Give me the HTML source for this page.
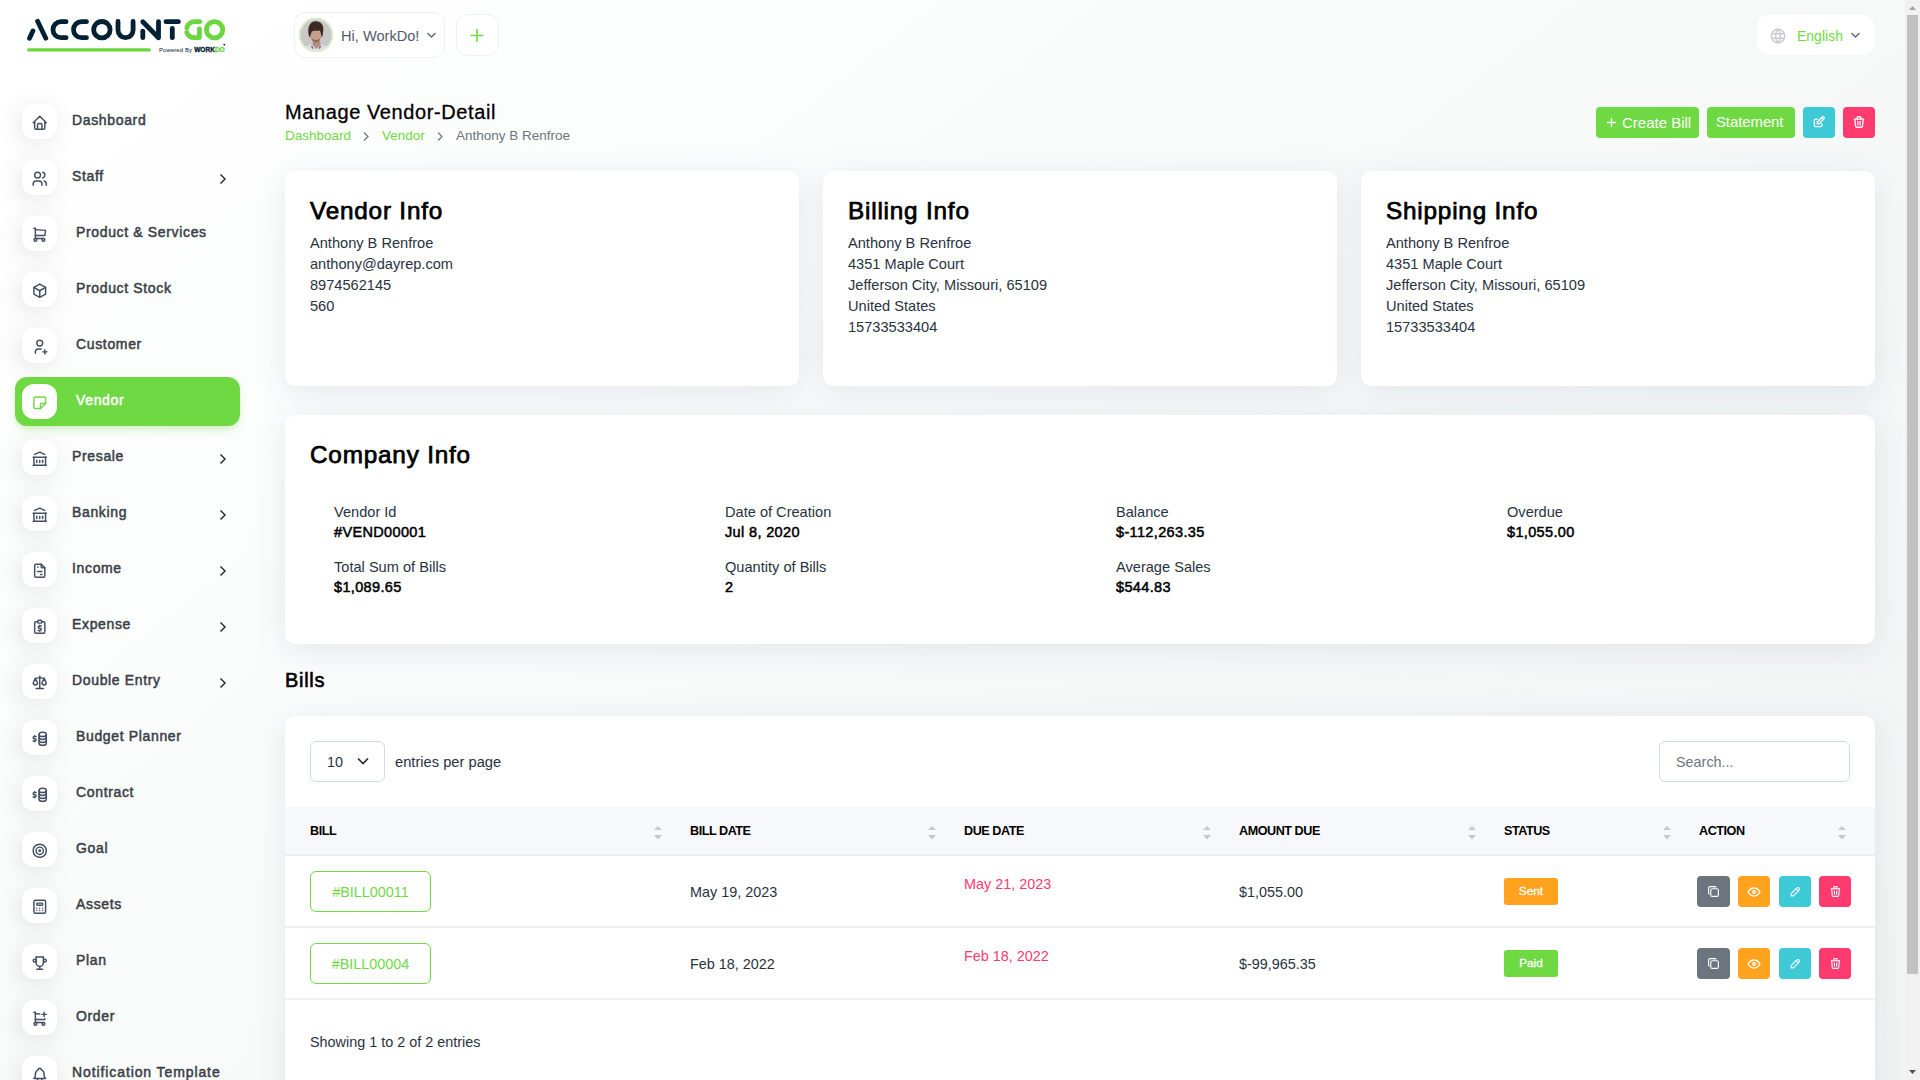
<!DOCTYPE html>
<html><head><meta charset="utf-8">
<style>
*{box-sizing:border-box;margin:0;padding:0}
html,body{width:1920px;height:1080px;overflow:hidden}
body{font-family:"Liberation Sans",sans-serif;color:#293240;position:relative;
background:linear-gradient(141.55deg,rgba(240,244,243,0) 3.46%,#f0f4f3 99.86%),#fff;}
.abs{position:absolute}
.card{position:absolute;background:#fff;border-radius:10px;box-shadow:0 6px 30px rgba(182,186,203,0.3)}
/* sidebar */
.mi{position:absolute;left:15px;width:225px;height:49px}
.mi .ic{position:absolute;left:7px;top:7px;width:35px;height:35px;border-radius:12px;background:#fff;box-shadow:-3px 4px 23px rgba(0,0,0,0.1);display:flex;align-items:center;justify-content:center}
.mi .ic svg{width:17.5px;height:17.5px;margin-top:2px;margin-left:1px;fill:none;stroke:#434f60;stroke-width:2;stroke-linecap:round;stroke-linejoin:round}
.mi .tx{position:absolute;left:57px;top:-1px;line-height:49px;font-size:14px;letter-spacing:0.65px;font-weight:400;-webkit-text-stroke:0.5px currentColor;color:#3a3f47;white-space:nowrap}
.mi .ch{position:absolute;left:204px;top:20px;width:8px;height:12px}
.mi.act{background:#6fd943;border-radius:12px;box-shadow:0 5px 7px -1px rgba(111,217,67,0.3)}
.mi.act .tx{color:#fff}
.mi.act .ic{box-shadow:none}
.mi.act .ic svg{stroke:#6fd943}
.btn{border-radius:4px}
.h5{font-size:24.3px;letter-spacing:0.8px;line-height:30px;font-weight:400;-webkit-text-stroke:0.75px #000;color:#000;white-space:nowrap}
.info{font-size:14.6px;line-height:21px;color:#293240;white-space:nowrap}
.lab{font-size:14.6px;line-height:20px;color:#293240;white-space:nowrap}
.val{font-size:14.5px;letter-spacing:0.35px;line-height:20px;font-weight:400;-webkit-text-stroke:0.5px #000;color:#000;white-space:nowrap}
.th{font-size:12.6px;letter-spacing:-0.45px;line-height:18px;font-weight:700;color:#000;white-space:nowrap}
.td{font-size:14.4px;line-height:18px;color:#293240;white-space:nowrap}
.sb{position:absolute;left:1905px;top:0;width:15px;height:1080px;background:#f1f1f1}
</style></head>
<body>


<!-- logo -->
<svg class="abs" style="left:0;top:0" width="260" height="60" viewBox="0 0 260 60">
 <g fill="none" stroke="#022133" stroke-width="4.8" stroke-linecap="round" stroke-linejoin="round">
  <path d="M29.5 38.2L32.9 30.9"/><path d="M37.6 21.3L45.8 38.2"/>
  <path d="M66.1 21.7H61A8 8 0 0 0 61 37.7H66.1"/>
  <path d="M86.5 21.7H81.5A8 8 0 0 0 81.5 37.7H86.5"/>
  <circle cx="101.9" cy="29.7" r="8.2"/>
  <path d="M118 21.5V30.1A7.55 7.55 0 0 0 133.1 30.1V21.5"/>
  <path d="M142.8 31.2V37.7"/><path d="M142.8 21.7L158.5 37.7V21.7"/>
  <path d="M166 21.7H178.4"/><path d="M172.3 28.4V37.7"/>
 </g>
 <g fill="none" stroke="#6bd63d" stroke-width="4.8" stroke-linecap="round" stroke-linejoin="round">
  <path d="M199.8 21.7H194.6A8 8 0 0 0 186.8 27.9"/>
  <path d="M186.8 32.4A8 8 0 0 0 194.6 37.7H199.4V29"/>
  <circle cx="214.6" cy="29.8" r="8.15"/>
  <path d="M28.7 49.9H149.2" stroke-width="3.3"/>
 </g>
 <text x="159" y="52.2" font-family="Liberation Sans" font-size="6" fill="#022133" textLength="33" lengthAdjust="spacing">Powered By</text>
 <text x="194.2" y="52.2" font-family="Liberation Sans" font-size="7" font-weight="700" fill="#022133" stroke="#022133" stroke-width="0.35" textLength="30.5" lengthAdjust="spacingAndGlyphs">WORK<tspan fill="#6bd63d" stroke="#6bd63d">DO</tspan></text>
 <circle cx="224.3" cy="44.7" r="0.9" fill="#022133"/>
</svg>

<!-- sidebar -->
<div class="mi" style="top:97px"><div class="ic"><svg viewBox="0 0 24 24"><path d="M5 12l-2 0l9 -9l9 9l-2 0"/><path d="M5 12v7a2 2 0 0 0 2 2h10a2 2 0 0 0 2 -2v-7"/><path d="M9 21v-6a2 2 0 0 1 2 -2h2a2 2 0 0 1 2 2v6"/></svg></div><div class="tx" style="left:57px">Dashboard</div></div>
<div class="mi" style="top:153px"><div class="ic"><svg viewBox="0 0 24 24"><path d="M9 7m-4 0a4 4 0 1 0 8 0a4 4 0 1 0 -8 0"/><path d="M3 21v-2a4 4 0 0 1 4 -4h4a4 4 0 0 1 4 4v2"/><path d="M16 3.13a4 4 0 0 1 0 7.75"/><path d="M21 21v-2a4 4 0 0 0 -3 -3.85"/></svg></div><div class="tx" style="left:57px">Staff</div><svg class="ch" viewBox="0 0 8 12"><path d="M1.5 1.5l4.5 4.5-4.5 4.5" fill="none" stroke="#293240" stroke-width="1.45"/></svg></div>
<div class="mi" style="top:209px"><div class="ic"><svg viewBox="0 0 24 24"><path d="M6 19m-2 0a2 2 0 1 0 4 0a2 2 0 1 0 -4 0"/><path d="M17 19m-2 0a2 2 0 1 0 4 0a2 2 0 1 0 -4 0"/><path d="M17 17h-11v-14h-2"/><path d="M6 5l14 1l-1 7h-13"/></svg></div><div class="tx" style="left:61px">Product &amp; Services</div></div>
<div class="mi" style="top:265px"><div class="ic"><svg viewBox="0 0 24 24"><path d="M12 3l8 4.5l0 9l-8 4.5l-8 -4.5l0 -9l8 -4.5"/><path d="M12 12l8 -4.5"/><path d="M12 12l0 9"/><path d="M12 12l-8 -4.5"/></svg></div><div class="tx" style="left:61px">Product Stock</div></div>
<div class="mi" style="top:321px"><div class="ic"><svg viewBox="0 0 24 24"><path d="M8 7a4 4 0 1 0 8 0a4 4 0 0 0 -8 0"/><path d="M16 19h6"/><path d="M19 16v6"/><path d="M6 21v-2a4 4 0 0 1 4 -4h4"/></svg></div><div class="tx" style="left:61px">Customer</div></div>
<div class="mi act" style="top:377px"><div class="ic"><svg viewBox="0 0 24 24"><path d="M13 20l7 -7"/><path d="M13 20v-6a1 1 0 0 1 1 -1h6v-7a2 2 0 0 0 -2 -2h-12a2 2 0 0 0 -2 2v12a2 2 0 0 0 2 2h7"/></svg></div><div class="tx" style="left:61px">Vendor</div></div>
<div class="mi" style="top:433px"><div class="ic"><svg viewBox="0 0 24 24"><path d="M3 21l18 0"/><path d="M3 10l18 0"/><path d="M5 6l7 -3l7 3"/><path d="M4 10l0 11"/><path d="M20 10l0 11"/><path d="M8 14l0 3"/><path d="M12 14l0 3"/><path d="M16 14l0 3"/></svg></div><div class="tx" style="left:57px">Presale</div><svg class="ch" viewBox="0 0 8 12"><path d="M1.5 1.5l4.5 4.5-4.5 4.5" fill="none" stroke="#293240" stroke-width="1.45"/></svg></div>
<div class="mi" style="top:489px"><div class="ic"><svg viewBox="0 0 24 24"><path d="M3 21l18 0"/><path d="M3 10l18 0"/><path d="M5 6l7 -3l7 3"/><path d="M4 10l0 11"/><path d="M20 10l0 11"/><path d="M8 14l0 3"/><path d="M12 14l0 3"/><path d="M16 14l0 3"/></svg></div><div class="tx" style="left:57px">Banking</div><svg class="ch" viewBox="0 0 8 12"><path d="M1.5 1.5l4.5 4.5-4.5 4.5" fill="none" stroke="#293240" stroke-width="1.45"/></svg></div>
<div class="mi" style="top:545px"><div class="ic"><svg viewBox="0 0 24 24"><path d="M14 3v4a1 1 0 0 0 1 1h4"/><path d="M17 21h-10a2 2 0 0 1 -2 -2v-14a2 2 0 0 1 2 -2h7l5 5v11a2 2 0 0 1 -2 2z"/><path d="M9 7l1 0"/><path d="M9 13l6 0"/><path d="M13 17l2 0"/></svg></div><div class="tx" style="left:57px">Income</div><svg class="ch" viewBox="0 0 8 12"><path d="M1.5 1.5l4.5 4.5-4.5 4.5" fill="none" stroke="#293240" stroke-width="1.45"/></svg></div>
<div class="mi" style="top:601px"><div class="ic"><svg viewBox="0 0 24 24"><path d="M9 5h-2a2 2 0 0 0 -2 2v12a2 2 0 0 0 2 2h10a2 2 0 0 0 2 -2v-12a2 2 0 0 0 -2 -2h-2"/><path d="M9 5a2 2 0 0 1 2 -2h2a2 2 0 0 1 2 2v0a2 2 0 0 1 -2 2h-2a2 2 0 0 1 -2 -2z"/><path d="M14 11h-2.5a1.5 1.5 0 0 0 0 3h1a1.5 1.5 0 0 1 0 3h-2.5"/><path d="M12 17v1m0 -8v1"/></svg></div><div class="tx" style="left:57px">Expense</div><svg class="ch" viewBox="0 0 8 12"><path d="M1.5 1.5l4.5 4.5-4.5 4.5" fill="none" stroke="#293240" stroke-width="1.45"/></svg></div>
<div class="mi" style="top:657px"><div class="ic"><svg viewBox="0 0 24 24"><path d="M7 20l10 0"/><path d="M6 6l6 -1l6 1"/><path d="M12 3l0 17"/><path d="M9 12l-3 -6l-3 6a3 3 0 0 0 6 0"/><path d="M21 12l-3 -6l-3 6a3 3 0 0 0 6 0"/></svg></div><div class="tx" style="left:57px">Double Entry</div><svg class="ch" viewBox="0 0 8 12"><path d="M1.5 1.5l4.5 4.5-4.5 4.5" fill="none" stroke="#293240" stroke-width="1.45"/></svg></div>
<div class="mi" style="top:713px"><div class="ic"><svg viewBox="0 0 24 24"><path d="M11 6a5 3 0 1 0 10 0a5 3 0 1 0 -10 0"/><path d="M11 6v4c0 1.657 2.239 3 5 3s5 -1.343 5 -3v-4"/><path d="M11 10v4c0 1.657 2.239 3 5 3s5 -1.343 5 -3v-4"/><path d="M11 14v4c0 1.657 2.239 3 5 3s5 -1.343 5 -3v-4"/><path d="M7 9h-2.5a1.5 1.5 0 0 0 0 3h1a1.5 1.5 0 0 1 0 3h-2.5"/><path d="M5 15v1m0 -8v1"/></svg></div><div class="tx" style="left:61px">Budget Planner</div></div>
<div class="mi" style="top:769px"><div class="ic"><svg viewBox="0 0 24 24"><path d="M11 6a5 3 0 1 0 10 0a5 3 0 1 0 -10 0"/><path d="M11 6v4c0 1.657 2.239 3 5 3s5 -1.343 5 -3v-4"/><path d="M11 10v4c0 1.657 2.239 3 5 3s5 -1.343 5 -3v-4"/><path d="M11 14v4c0 1.657 2.239 3 5 3s5 -1.343 5 -3v-4"/><path d="M7 9h-2.5a1.5 1.5 0 0 0 0 3h1a1.5 1.5 0 0 1 0 3h-2.5"/><path d="M5 15v1m0 -8v1"/></svg></div><div class="tx" style="left:61px">Contract</div></div>
<div class="mi" style="top:825px"><div class="ic"><svg viewBox="0 0 24 24"><path d="M11 12a1 1 0 1 0 2 0a1 1 0 1 0 -2 0"/><path d="M7 12a5 5 0 1 0 10 0a5 5 0 1 0 -10 0"/><path d="M3 12a9 9 0 1 0 18 0a9 9 0 1 0 -18 0"/></svg></div><div class="tx" style="left:61px">Goal</div></div>
<div class="mi" style="top:881px"><div class="ic"><svg viewBox="0 0 24 24"><path d="M4 5a2 2 0 0 1 2 -2h12a2 2 0 0 1 2 2v14a2 2 0 0 1 -2 2h-12a2 2 0 0 1 -2 -2z"/><path d="M8 8a1 1 0 0 1 1 -1h6a1 1 0 0 1 1 1v1a1 1 0 0 1 -1 1h-6a1 1 0 0 1 -1 -1z"/><path d="M8 14l0 .01"/><path d="M12 14l0 .01"/><path d="M16 14l0 .01"/><path d="M8 17l0 .01"/><path d="M12 17l0 .01"/><path d="M16 17l0 .01"/></svg></div><div class="tx" style="left:61px">Assets</div></div>
<div class="mi" style="top:937px"><div class="ic"><svg viewBox="0 0 24 24"><path d="M8 21l8 0"/><path d="M12 17l0 4"/><path d="M7 4l10 0"/><path d="M17 4v8a5 5 0 0 1 -10 0v-8"/><path d="M3 9a2 2 0 1 0 4 0a2 2 0 1 0 -4 0"/><path d="M17 9a2 2 0 1 0 4 0a2 2 0 1 0 -4 0"/></svg></div><div class="tx" style="left:61px">Plan</div></div>
<div class="mi" style="top:993px"><div class="ic"><svg viewBox="0 0 24 24"><circle cx="6" cy="19" r="2"/><circle cx="17" cy="19" r="2"/><path d="M17 17h-11v-14h-2"/><path d="M6 5l6 .429m7.138 6.573l-.143 1h-13"/><path d="M15 6h6m-3 -3v6"/></svg></div><div class="tx" style="left:61px">Order</div></div>
<div class="mi" style="top:1049px"><div class="ic"><svg viewBox="0 0 24 24"><path d="M10 5a2 2 0 1 1 4 0a7 7 0 0 1 4 6v3a4 4 0 0 0 2 3h-16a4 4 0 0 0 2 -3v-3a7 7 0 0 1 4 -6"/><path d="M9 17v1a3 3 0 0 0 6 0v-1"/></svg></div><div class="tx" style="left:57px;letter-spacing:0.9px">Notification Template</div></div>

<!-- header -->
<div class="abs" style="left:294px;top:12px;width:151px;height:46px;background:#fff;border:1px solid #eef0f2;border-radius:12px"></div>
<div class="abs" style="left:299px;top:18px;width:34px;height:34px;border-radius:50%;overflow:hidden;background:#cbc7c6">
 <svg width="34" height="34" viewBox="0 0 34 34" style="display:block">
  <rect width="34" height="34" fill="#cbc7c6"/>
  <path d="M2 34C4 29 9 27 13 26.5L17.5 30L22 26.5C26 27 30 29 32 34Z" fill="#dcdce5"/>
  <path d="M14 22L21 22L21.5 27L17.5 31L13.5 27Z" fill="#b38e80"/>
  <path d="M12.5 28l1.5 2.5M21.5 28l-1.2 2.5" stroke="#4f5573" stroke-width="1.2"/>
  <ellipse cx="16.8" cy="17.8" rx="5.2" ry="6.3" fill="#c89e8e"/>
  <path d="M11.8 19C12.5 22.5 14.5 24.5 16.8 24.5S21.2 22.5 21.8 19C21 21 19 22 16.8 22S12.6 21 11.8 19Z" fill="#8e6c60"/>
  <path d="M9.5 16C8.5 9 11 3.5 16.5 3.3C22.5 3.2 25 7.5 24.2 13C24 16 23.5 18.5 22.5 19.5C22 16 21.5 13.5 20.5 12.5C18.5 13.5 15 12 13 13.5C12 15 11.5 17 11.2 19.5C10 18.5 9.7 17.5 9.5 16Z" fill="#3a2a22"/>
 </svg>
 <div style="position:absolute;left:0;top:0;width:34px;height:34px;border-radius:50%;box-shadow:inset 0 0 0 1.5px #d9f5cd"></div>
</div>
<div class="abs" style="left:341px;top:27px;font-size:14.6px;line-height:18px;color:#525b69;white-space:nowrap">Hi, WorkDo!</div>
<svg class="abs" style="left:426px;top:31px" width="11" height="8" viewBox="0 0 11 8"><path d="M1.5 2l4 4 4-4" fill="none" stroke="#5b6470" stroke-width="1.3"/></svg>
<div class="abs" style="left:456px;top:14px;width:43px;height:42px;background:#fff;border:1px solid #eef0f2;border-radius:12px"></div>
<svg class="abs" style="left:469px;top:28px" width="16" height="15" viewBox="0 0 16 15"><path d="M8 1V14M1.5 7.5H14.5" stroke="#6fd943" stroke-width="1.6" fill="none"/></svg>

<div class="abs" style="left:1757px;top:15px;width:117px;height:40px;background:#fff;border-radius:12px"></div>
<svg class="abs" style="left:1769px;top:27px" width="18" height="18" viewBox="0 0 24 24" fill="none" stroke="#c9cdd2" stroke-width="2" stroke-linecap="round"><circle cx="12" cy="12" r="9"/><path d="M3.6 9h16.8M3.6 15h16.8M11.5 3a17 17 0 0 0 0 18M12.5 3a17 17 0 0 1 0 18"/></svg>
<div class="abs" style="left:1797px;top:27px;font-size:14px;line-height:18px;color:#6fd943;white-space:nowrap">English</div>
<svg class="abs" style="left:1850px;top:31px" width="11" height="8" viewBox="0 0 11 8"><path d="M1.5 2l4 4 4-4" fill="none" stroke="#5b6470" stroke-width="1.3"/></svg>


<!-- page header -->
<div class="abs" style="left:285px;top:99.5px;font-size:20px;letter-spacing:0.6px;-webkit-text-stroke:0.3px #000;line-height:24px;color:#000;white-space:nowrap">Manage Vendor-Detail</div>
<div class="abs" style="left:285px;top:128px;font-size:13.5px;line-height:16px;white-space:nowrap;color:#6c757d">
 <span style="color:#6fd943">Dashboard</span>
</div>
<div class="abs" style="left:382px;top:128px;font-size:13.5px;line-height:16px;white-space:nowrap;color:#6fd943">Vendor</div>
<div class="abs" style="left:456px;top:128px;font-size:13.5px;line-height:16px;white-space:nowrap;color:#6c757d">Anthony B Renfroe</div>
<svg class="abs" style="left:362px;top:131px" width="8" height="11" viewBox="0 0 8 11"><path d="M2 1.5l4 4-4 4" fill="none" stroke="#6c757d" stroke-width="1.2"/></svg>
<svg class="abs" style="left:436px;top:131px" width="8" height="11" viewBox="0 0 8 11"><path d="M2 1.5l4 4-4 4" fill="none" stroke="#6c757d" stroke-width="1.2"/></svg>

<div class="abs btn" style="left:1596px;top:107px;width:103px;height:31px;background:#6fd943"></div>
<svg class="abs" style="left:1606px;top:117px" width="11" height="11" viewBox="0 0 11 11"><path d="M5.5 1V10M1 5.5H10" stroke="#fff" stroke-width="1.3"/></svg><div class="abs" style="left:1622px;top:114px;font-size:15px;line-height:17px;color:#fff;white-space:nowrap">Create Bill</div>
<div class="abs btn" style="left:1707px;top:107px;width:88px;height:31px;background:#6fd943"></div>
<div class="abs" style="left:1716px;top:114px;font-size:14.8px;line-height:17px;color:#fff;white-space:nowrap">Statement</div>
<div class="abs btn" style="left:1803px;top:107px;width:32px;height:31px;background:#3ec9d6"></div>
<svg class="abs" style="left:1812px;top:115px" width="14" height="14" viewBox="0 0 24 24" fill="none" stroke="#fff" stroke-width="2.2" stroke-linecap="round" stroke-linejoin="round"><path d="M9 7h-3a2 2 0 0 0 -2 2v9a2 2 0 0 0 2 2h9a2 2 0 0 0 2 -2v-3"/><path d="M9 15h3l8.5 -8.5a1.5 1.5 0 0 0 -3 -3l-8.5 8.5v3"/><path d="M16 5l3 3"/></svg>
<div class="abs btn" style="left:1843px;top:107px;width:32px;height:31px;background:#ff3a6e"></div>
<svg class="abs" style="left:1852px;top:115px" width="14" height="14" viewBox="0 0 24 24" fill="none" stroke="#fff" stroke-width="2.2" stroke-linecap="round" stroke-linejoin="round"><path d="M4 7l16 0"/><path d="M10 11l0 6"/><path d="M14 11l0 6"/><path d="M5 7l1 12a2 2 0 0 0 2 2h8a2 2 0 0 0 2 -2l1 -12"/><path d="M9 7v-3a1 1 0 0 1 1 -1h4a1 1 0 0 1 1 1v3"/></svg>

<!-- info cards -->
<div class="card" style="left:285px;top:171px;width:514px;height:215px"></div>
<div class="card" style="left:823px;top:171px;width:514px;height:215px"></div>
<div class="card" style="left:1361px;top:171px;width:514px;height:215px"></div>
<div class="abs h5" style="left:310px;top:196px">Vendor Info</div>
<div class="abs info" style="left:310px;top:233px">Anthony B Renfroe<br>anthony@dayrep.com<br>8974562145<br>560</div>
<div class="abs h5" style="left:848px;top:196px">Billing Info</div>
<div class="abs info" style="left:848px;top:233px">Anthony B Renfroe<br>4351 Maple Court<br>Jefferson City, Missouri, 65109<br>United States<br>15733533404</div>
<div class="abs h5" style="left:1386px;top:196px">Shipping Info</div>
<div class="abs info" style="left:1386px;top:233px">Anthony B Renfroe<br>4351 Maple Court<br>Jefferson City, Missouri, 65109<br>United States<br>15733533404</div>

<!-- company info -->
<div class="card" style="left:285px;top:415px;width:1590px;height:229px"></div>
<div class="abs h5" style="left:310px;top:440px">Company Info</div>
<div class="abs lab" style="left:334px;top:502px">Vendor Id</div><div class="abs val" style="left:334px;top:522px">#VEND00001</div>
<div class="abs lab" style="left:334px;top:557px">Total Sum of Bills</div><div class="abs val" style="left:334px;top:577px">$1,089.65</div>
<div class="abs lab" style="left:725px;top:502px">Date of Creation</div><div class="abs val" style="left:725px;top:522px">Jul 8, 2020</div>
<div class="abs lab" style="left:725px;top:557px">Quantity of Bills</div><div class="abs val" style="left:725px;top:577px">2</div>
<div class="abs lab" style="left:1116px;top:502px">Balance</div><div class="abs val" style="left:1116px;top:522px">$-112,263.35</div>
<div class="abs lab" style="left:1116px;top:557px">Average Sales</div><div class="abs val" style="left:1116px;top:577px">$544.83</div>
<div class="abs lab" style="left:1507px;top:502px">Overdue</div><div class="abs val" style="left:1507px;top:522px">$1,055.00</div>

<!-- bills -->
<div class="abs" style="left:285px;top:668px;font-size:20px;letter-spacing:0.7px;line-height:24px;font-weight:400;-webkit-text-stroke:0.6px #000;color:#000">Bills</div>
<div class="card" style="left:285px;top:716px;width:1590px;height:420px"></div>


<!-- table -->
<div class="abs" style="left:310px;top:741px;width:75px;height:41px;border:1px solid #d5dae0;border-radius:6px;background:#fff"></div>
<div class="abs" style="left:327px;top:753px;font-size:14.4px;line-height:18px;color:#293240">10</div>
<svg class="abs" style="left:356px;top:756px" width="14" height="10" viewBox="0 0 14 10"><path d="M2 2.5l5 5 5-5" fill="none" stroke="#212529" stroke-width="1.6"/></svg>
<div class="abs" style="left:395px;top:753px;font-size:14.7px;line-height:18px;color:#293240;white-space:nowrap">entries per page</div>
<div class="abs" style="left:1659px;top:741px;width:191px;height:41px;border:1px solid #d5dae0;border-radius:6px;background:#fff"></div>
<div class="abs" style="left:1676px;top:753px;font-size:14.4px;line-height:18px;color:#6c757d;white-space:nowrap">Search...</div>

<div class="abs" style="left:285px;top:807px;width:1590px;height:47px;background:#f6f8fb"></div>
<div class="abs" style="left:285px;top:854px;width:1590px;height:2px;background:#eceef1"></div>
<div class="abs" style="left:285px;top:926px;width:1590px;height:2px;background:#eceef1"></div>
<div class="abs" style="left:285px;top:998px;width:1590px;height:2px;background:#f0f2f4"></div>
<div class="abs th" style="left:310px;top:822px">BILL</div><svg class="abs" style="left:654px;top:825px" width="8" height="16" viewBox="0 0 8 16"><path d="M0 5L4 1L8 5Z M0 10L4 14.5L8 10Z" fill="#c5c8cc"/></svg>
<div class="abs th" style="left:690px;top:822px">BILL DATE</div><svg class="abs" style="left:928px;top:825px" width="8" height="16" viewBox="0 0 8 16"><path d="M0 5L4 1L8 5Z M0 10L4 14.5L8 10Z" fill="#c5c8cc"/></svg>
<div class="abs th" style="left:964px;top:822px">DUE DATE</div><svg class="abs" style="left:1203px;top:825px" width="8" height="16" viewBox="0 0 8 16"><path d="M0 5L4 1L8 5Z M0 10L4 14.5L8 10Z" fill="#c5c8cc"/></svg>
<div class="abs th" style="left:1239px;top:822px">AMOUNT DUE</div><svg class="abs" style="left:1468px;top:825px" width="8" height="16" viewBox="0 0 8 16"><path d="M0 5L4 1L8 5Z M0 10L4 14.5L8 10Z" fill="#c5c8cc"/></svg>
<div class="abs th" style="left:1504px;top:822px">STATUS</div><svg class="abs" style="left:1663px;top:825px" width="8" height="16" viewBox="0 0 8 16"><path d="M0 5L4 1L8 5Z M0 10L4 14.5L8 10Z" fill="#c5c8cc"/></svg>
<div class="abs th" style="left:1699px;top:822px">ACTION</div><svg class="abs" style="left:1838px;top:825px" width="8" height="16" viewBox="0 0 8 16"><path d="M0 5L4 1L8 5Z M0 10L4 14.5L8 10Z" fill="#c5c8cc"/></svg>
<div class="abs" style="left:310px;top:871px;width:121px;height:41px;border:1px solid #6fd943;border-radius:6px"></div><div class="abs td" style="left:310px;width:121px;text-align:center;top:883px;color:#6fd943">#BILL00011</div>
<div class="abs td" style="left:690px;top:883px">May 19, 2023</div><div class="abs td" style="left:964px;top:875px;color:#ff3a6e">May 21, 2023</div><div class="abs td" style="left:1239px;top:883px">$1,055.00</div>
<div class="abs" style="left:1504px;top:878px;width:54px;height:27px;background:#ffa21d;border-radius:3px;color:#fff;font-size:11.8px;font-weight:400;-webkit-text-stroke:0.3px #fff;line-height:27px;text-align:center">Sent</div>
<div class="abs" style="left:1697px;top:876px;width:33px;height:31px;background:#6c757d;border-radius:4px;display:flex;align-items:center;justify-content:center"><svg width="13" height="13" viewBox="0 0 24 24" fill="none" stroke="#fff" stroke-width="2" stroke-linecap="round" stroke-linejoin="round"><path d="M7 9.667a2.667 2.667 0 0 1 2.667 -2.667h8.666a2.667 2.667 0 0 1 2.667 2.667v8.666a2.667 2.667 0 0 1 -2.667 2.667h-8.666a2.667 2.667 0 0 1 -2.667 -2.667z"/><path d="M4.012 16.737a2.005 2.005 0 0 1 -1.012 -1.737v-10c0 -1.1 .9 -2 2 -2h10c.75 0 1.158 .385 1.5 1"/></svg></div>
<div class="abs" style="left:1738px;top:876px;width:32px;height:31px;background:#ffa21d;border-radius:4px;display:flex;align-items:center;justify-content:center"><svg width="16" height="16" viewBox="0 0 24 24" fill="none" stroke="#fff" stroke-width="2" stroke-linecap="round" stroke-linejoin="round"><path d="M10 12a2 2 0 1 0 4 0a2 2 0 0 0 -4 0"/><path d="M21 12c-2.4 4 -5.4 6 -9 6c-3.6 0 -6.6 -2 -9 -6c2.4 -4 5.4 -6 9 -6c3.6 0 6.6 2 9 6"/></svg></div>
<div class="abs" style="left:1779px;top:876px;width:32px;height:31px;background:#3ec9d6;border-radius:4px;display:flex;align-items:center;justify-content:center"><svg width="13" height="13" viewBox="0 0 24 24" fill="none" stroke="#fff" stroke-width="2" stroke-linecap="round" stroke-linejoin="round"><path d="M4 20h4l10.5 -10.5a2.828 2.828 0 1 0 -4 -4l-10.5 10.5v4"/><path d="M13.5 6.5l4 4"/></svg></div>
<div class="abs" style="left:1819px;top:876px;width:32px;height:31px;background:#ff3a6e;border-radius:4px;display:flex;align-items:center;justify-content:center"><svg width="13" height="13" viewBox="0 0 24 24" fill="none" stroke="#fff" stroke-width="2" stroke-linecap="round" stroke-linejoin="round"><path d="M4 7l16 0"/><path d="M10 11l0 6"/><path d="M14 11l0 6"/><path d="M5 7l1 12a2 2 0 0 0 2 2h8a2 2 0 0 0 2 -2l1 -12"/><path d="M9 7v-3a1 1 0 0 1 1 -1h4a1 1 0 0 1 1 1v3"/></svg></div>
<div class="abs" style="left:310px;top:943px;width:121px;height:41px;border:1px solid #6fd943;border-radius:6px"></div><div class="abs td" style="left:310px;width:121px;text-align:center;top:955px;color:#6fd943">#BILL00004</div>
<div class="abs td" style="left:690px;top:955px">Feb 18, 2022</div><div class="abs td" style="left:964px;top:947px;color:#ff3a6e">Feb 18, 2022</div><div class="abs td" style="left:1239px;top:955px">$-99,965.35</div>
<div class="abs" style="left:1504px;top:950px;width:54px;height:27px;background:#6fd943;border-radius:3px;color:#fff;font-size:11.8px;font-weight:400;-webkit-text-stroke:0.3px #fff;line-height:27px;text-align:center">Paid</div>
<div class="abs" style="left:1697px;top:948px;width:33px;height:31px;background:#6c757d;border-radius:4px;display:flex;align-items:center;justify-content:center"><svg width="13" height="13" viewBox="0 0 24 24" fill="none" stroke="#fff" stroke-width="2" stroke-linecap="round" stroke-linejoin="round"><path d="M7 9.667a2.667 2.667 0 0 1 2.667 -2.667h8.666a2.667 2.667 0 0 1 2.667 2.667v8.666a2.667 2.667 0 0 1 -2.667 2.667h-8.666a2.667 2.667 0 0 1 -2.667 -2.667z"/><path d="M4.012 16.737a2.005 2.005 0 0 1 -1.012 -1.737v-10c0 -1.1 .9 -2 2 -2h10c.75 0 1.158 .385 1.5 1"/></svg></div>
<div class="abs" style="left:1738px;top:948px;width:32px;height:31px;background:#ffa21d;border-radius:4px;display:flex;align-items:center;justify-content:center"><svg width="16" height="16" viewBox="0 0 24 24" fill="none" stroke="#fff" stroke-width="2" stroke-linecap="round" stroke-linejoin="round"><path d="M10 12a2 2 0 1 0 4 0a2 2 0 0 0 -4 0"/><path d="M21 12c-2.4 4 -5.4 6 -9 6c-3.6 0 -6.6 -2 -9 -6c2.4 -4 5.4 -6 9 -6c3.6 0 6.6 2 9 6"/></svg></div>
<div class="abs" style="left:1779px;top:948px;width:32px;height:31px;background:#3ec9d6;border-radius:4px;display:flex;align-items:center;justify-content:center"><svg width="13" height="13" viewBox="0 0 24 24" fill="none" stroke="#fff" stroke-width="2" stroke-linecap="round" stroke-linejoin="round"><path d="M4 20h4l10.5 -10.5a2.828 2.828 0 1 0 -4 -4l-10.5 10.5v4"/><path d="M13.5 6.5l4 4"/></svg></div>
<div class="abs" style="left:1819px;top:948px;width:32px;height:31px;background:#ff3a6e;border-radius:4px;display:flex;align-items:center;justify-content:center"><svg width="13" height="13" viewBox="0 0 24 24" fill="none" stroke="#fff" stroke-width="2" stroke-linecap="round" stroke-linejoin="round"><path d="M4 7l16 0"/><path d="M10 11l0 6"/><path d="M14 11l0 6"/><path d="M5 7l1 12a2 2 0 0 0 2 2h8a2 2 0 0 0 2 -2l1 -12"/><path d="M9 7v-3a1 1 0 0 1 1 -1h4a1 1 0 0 1 1 1v3"/></svg></div>
<div class="abs td" style="left:310px;top:1033px">Showing 1 to 2 of 2 entries</div>

<!-- scrollbar -->
<div class="sb">
  <div class="abs" style="left:2px;top:15px;width:11px;height:959px;background:#c1c1c1"></div>
  <svg class="abs" style="left:0;top:0" width="15" height="15"><path d="M4 10h7l-3.5-4z" fill="#a3a3a3"/></svg>
  <svg class="abs" style="left:0;top:1065px" width="15" height="15"><path d="M4 5h7l-3.5 4z" fill="#505050"/></svg>
</div>

</body></html>
